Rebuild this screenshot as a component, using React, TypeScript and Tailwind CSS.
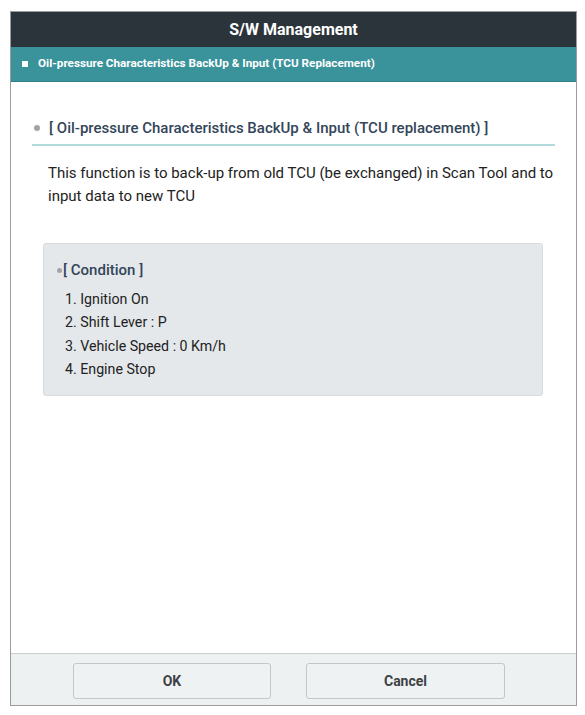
import React from "react";

export default function App() {
  const font = { fontFamily: "Roboto, 'Liberation Sans', sans-serif" };
  return (
    <div className="w-[585px] h-[715px] bg-white pt-[11px] pl-[10px]" style={font}>
      <div className="w-[567px] h-[695px] border border-[#9c9c9c] flex flex-col">
        <div className="h-[35px] bg-[#2c343b] flex items-center justify-center text-white text-[16px] font-bold">
          S/W Management
        </div>
        <div className="h-[35px] bg-[#3a939b] flex items-center pl-[11px] text-white text-[11.7px] font-bold border-b border-[#2f8088]">
          <span className="w-[6px] h-[6px] bg-white mr-[10px]"></span>
          Oil-pressure Characteristics BackUp &amp; Input (TCU Replacement)
        </div>
        <div className="flex-1 pt-[36px]">
          <div className="ml-[21px] mr-[21px] border-b-2 border-[#b3dadd] flex items-center pb-[6px]">
            <span className="w-[6px] h-[6px] rounded-full bg-[#9ea4a8] ml-[2px] mr-[9px]"></span>
            <span className="text-[15px] font-medium text-[#334559] leading-[20px]">
              [ Oil-pressure Characteristics BackUp &amp; Input (TCU replacement) ]
            </span>
          </div>
          <p className="ml-[37px] mr-[20px] mt-[16px] text-[15px] leading-[23px] text-[#222]">
            This function is to back-up from old TCU (be exchanged) in Scan Tool and to input data to new TCU
          </p>
          <div className="ml-[32px] w-[500px] mt-[35px] h-[153px] bg-[#e4e8eb] border border-[#d6dbde] rounded-[3px] pt-[16px] pl-[13px]">
            <div className="flex items-center text-[15px] font-medium text-[#334559] leading-[20px]">
              <span className="w-[5px] h-[5px] rounded-full bg-[#9ea4a8] mr-[1px]"></span>
              [ Condition ]
            </div>
            <ul className="mt-[8px] pl-[8px] text-[14.2px] text-[#222] leading-[23.4px]">
              <li>1. Ignition On</li>
              <li>2. Shift Lever : P</li>
              <li>3. Vehicle Speed : 0 Km/h</li>
              <li>4. Engine Stop</li>
            </ul>
          </div>
        </div>
        <div className="h-[52px] bg-[#eef1f1] border-t border-[#c9cdcd] flex items-start pt-[9px] pl-[62px] gap-[35px]">
          <button className="w-[198px] h-[36px] bg-[#eff2f2] border border-[#c3c7c7] rounded-[3px] text-[14px] font-bold text-[#3c4246]">
            OK
          </button>
          <button className="w-[199px] h-[36px] bg-[#eff2f2] border border-[#c3c7c7] rounded-[3px] text-[14px] font-bold text-[#3c4246]">
            Cancel
          </button>
        </div>
      </div>
    </div>
  );
}
